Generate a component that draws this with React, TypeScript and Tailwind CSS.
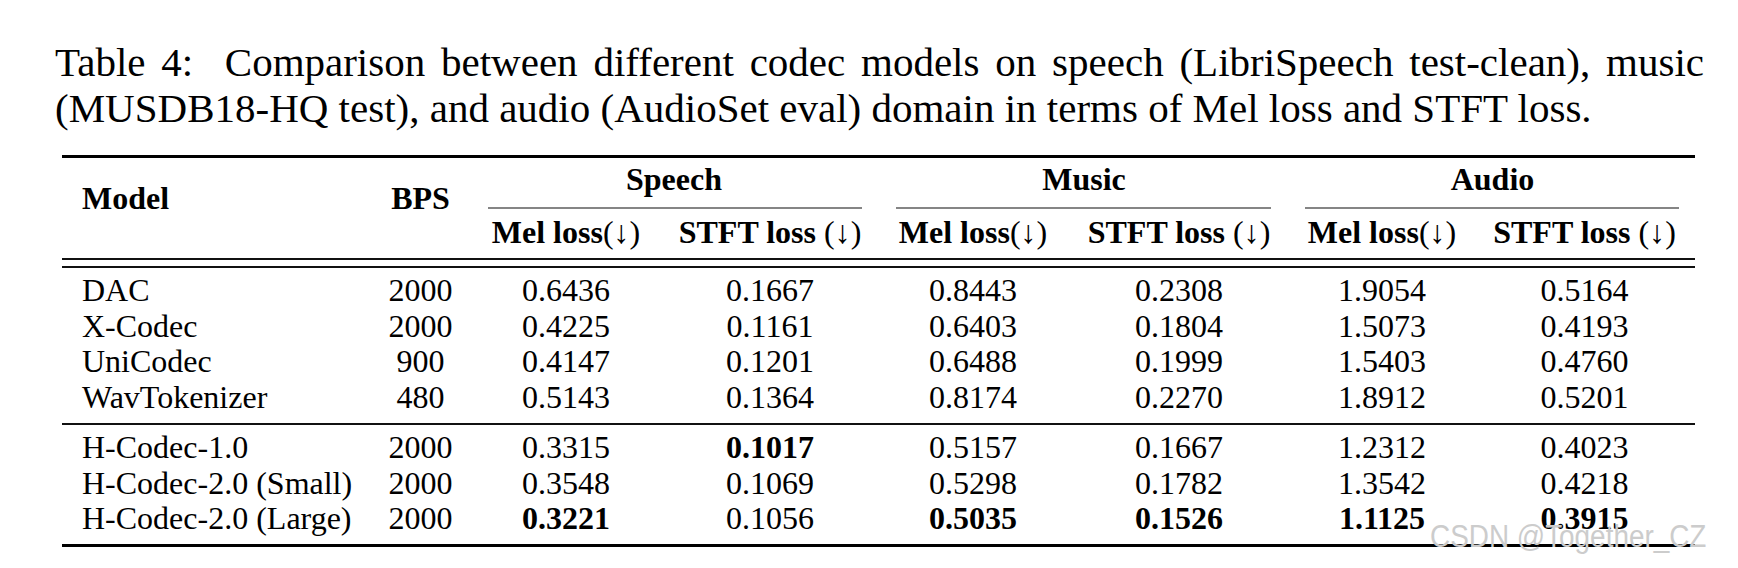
import React from 'react';

interface Row {
  model: string;
  bps: string;
  values: string[];
  bold?: number[];
}

const firstBlock: Row[] = [
  { model: 'DAC', bps: '2000', values: ['0.6436', '0.1667', '0.8443', '0.2308', '1.9054', '0.5164'] },
  { model: 'X-Codec', bps: '2000', values: ['0.4225', '0.1161', '0.6403', '0.1804', '1.5073', '0.4193'] },
  { model: 'UniCodec', bps: '900', values: ['0.4147', '0.1201', '0.6488', '0.1999', '1.5403', '0.4760'] },
  { model: 'WavTokenizer', bps: '480', values: ['0.5143', '0.1364', '0.8174', '0.2270', '1.8912', '0.5201'] },
];

const secondBlock: Row[] = [
  { model: 'H-Codec-1.0', bps: '2000', values: ['0.3315', '0.1017', '0.5157', '0.1667', '1.2312', '0.4023'], bold: [1] },
  { model: 'H-Codec-2.0 (Small)', bps: '2000', values: ['0.3548', '0.1069', '0.5298', '0.1782', '1.3542', '0.4218'] },
  { model: 'H-Codec-2.0 (Large)', bps: '2000', values: ['0.3221', '0.1056', '0.5035', '0.1526', '1.1125', '0.3915'], bold: [0, 2, 3, 4, 5] },
];

const rowGrid = 'grid grid-cols-[309px_99px_192px_216px_190px_222px_184px_221px] h-[35.5px] leading-[35.5px]';

function DataRow({ row }: { row: Row }) {
  return (
    <div className={rowGrid}>
      <div className="pl-[20px] whitespace-nowrap">{row.model}</div>
      <div className="text-center">{row.bps}</div>
      {row.values.map((v, i) => (
        <div key={i} className={`text-center ${row.bold?.includes(i) ? 'font-bold' : ''}`}>
          {v}
        </div>
      ))}
    </div>
  );
}

function SubHead({ width, label }: { width: string; label: string }) {
  return (
    <div className={`${width} text-center font-bold whitespace-nowrap`}>
      {label}
      <span className="font-normal">(↓)</span>
    </div>
  );
}

function Group({ label, cols, trim }: { label: string; cols: string[]; trim: string }) {
  return (
    <div className="flex flex-col">
      <div className="pt-[4px] h-[39.5px] leading-[35.5px] text-center font-bold">{label}</div>
      <div className={`mt-[10px] h-[1.5px] bg-[#858585] ${trim}`} />
      <div className="flex mt-[6px] leading-[35.5px]">
        <SubHead width={cols[0]} label="Mel loss" />
        <SubHead width={cols[1]} label="STFT loss " />
      </div>
    </div>
  );
}

export default function App() {
  return (
    <div className="relative w-[1738px] h-[568px] bg-white text-black font-['Liberation_Serif',serif] overflow-hidden">
      <p className="pt-[39px] ml-[55px] w-[1649px] text-[41px] leading-[46px] text-justify">
        Table 4:&nbsp; Comparison between different codec models on speech (LibriSpeech test-clean), music
        (MUSDB18-HQ test), and audio (AudioSet eval) domain in terms of Mel loss and STFT loss.
      </p>

      <div className="ml-[62px] mt-[24px] w-[1633px] text-[32px]">
        <div className="h-[2.5px] bg-black" />

        <div className="flex h-[100.5px]">
          <div className="w-[309px] pl-[20px] pt-[23px] leading-[35.5px] font-bold">Model</div>
          <div className="w-[99px] pt-[23px] leading-[35.5px] text-center font-bold">BPS</div>
          <Group label="Speech" cols={['w-[192px]', 'w-[216px]']} trim="ml-[18px] mr-[16px]" />
          <Group label="Music" cols={['w-[190px]', 'w-[222px]']} trim="ml-[18px] mr-[19px]" />
          <Group label="Audio" cols={['w-[184px]', 'w-[221px]']} trim="ml-[15px] mr-[16px]" />
        </div>

        <div className="h-[1.5px] bg-[#111]" />
        <div className="mt-[6.5px] h-[1.5px] bg-[#111]" />

        <div className="mt-[5.5px]">
          {firstBlock.map((r) => (
            <DataRow key={r.model} row={r} />
          ))}
        </div>

        <div className="mt-[8px] h-[1.5px] bg-[#111]" />

        <div className="mt-[5.5px]">
          {secondBlock.map((r) => (
            <DataRow key={r.model} row={r} />
          ))}
        </div>

        <div className="mt-[7.5px] h-[2.5px] bg-black" />
      </div>

      <div className="absolute left-[1430px] top-[519px] origin-left scale-x-90 text-[31px] leading-[36px] font-['Liberation_Sans',sans-serif] text-[#cccccc] whitespace-nowrap">
        CSDN @Together_CZ
      </div>
    </div>
  );
}
